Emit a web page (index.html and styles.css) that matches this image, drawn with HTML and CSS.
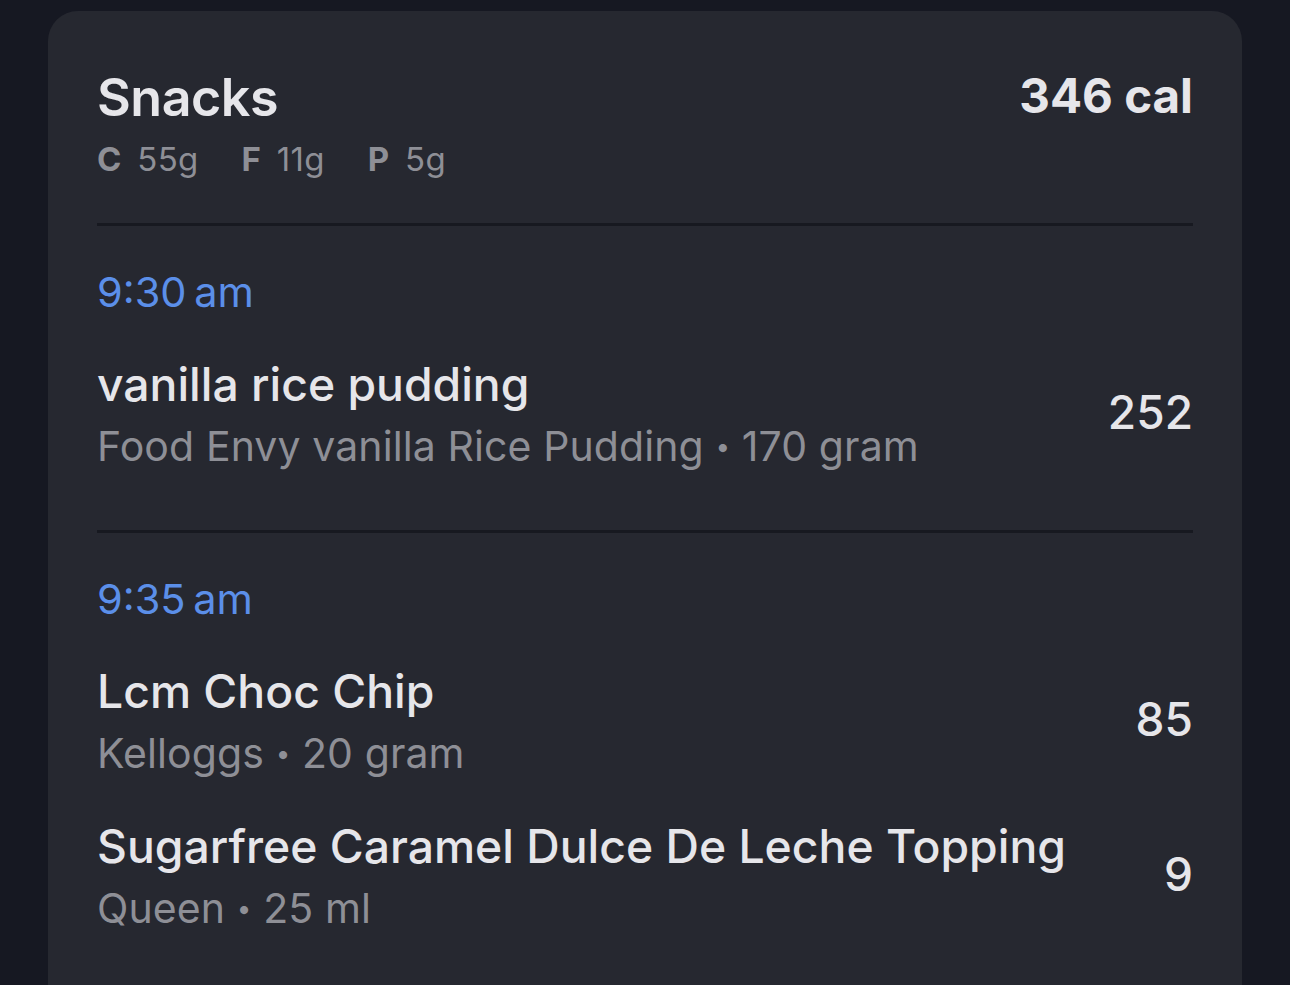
FILE: index.html
```html
<!DOCTYPE html>
<html lang="en">
<head>
    <meta charset="UTF-8">
    <meta name="viewport" content="width=device-width, initial-scale=1.0">
    <title>Snacks</title>
    <link rel="stylesheet" href="styles.css">
</head>
<body>
    <div class="page">
        <div class="meal-card">
            <div class="meal-head">
                <div>
                    <h1 class="meal-title">Snacks</h1>
                    <div class="macros">
                        <span><b>C</b> 55g</span>
                        <span><b>F</b> 11g</span>
                        <span><b>P</b> 5g</span>
                    </div>
                </div>
                <div class="meal-cal">346 cal</div>
            </div>

            <div class="entry">
                <p class="time">9:30 am</p>
                <div class="food">
                    <div class="food-info">
                        <p class="food-name">vanilla rice pudding</p>
                        <p class="food-sub">Food Envy vanilla Rice Pudding <span class="dot">&bull;</span> 170 gram</p>
                    </div>
                    <div class="food-cal">252</div>
                </div>
            </div>

            <div class="entry">
                <p class="time">9:35 am</p>
                <div class="food">
                    <div class="food-info">
                        <p class="food-name">Lcm Choc Chip</p>
                        <p class="food-sub">Kelloggs <span class="dot">&bull;</span> 20 gram</p>
                    </div>
                    <div class="food-cal">85</div>
                </div>
                <div class="food">
                    <div class="food-info">
                        <p class="food-name">Sugarfree Caramel Dulce De Leche Topping</p>
                        <p class="food-sub">Queen <span class="dot">&bull;</span> 25 ml</p>
                    </div>
                    <div class="food-cal">9</div>
                </div>
            </div>
        </div>
    </div>
</body>
</html>
```

FILE: styles.css
```css
body{
    margin: 0;
    background-color: #161822;
    font-family: "Inter", "Noto Sans", sans-serif;
    color: #e6e6ea;
    overflow: hidden;
}

p, h1{
    margin: 0;
}

.page{
    height: 985px;
    padding: 11px 48px 0 48px;
}

.meal-card{
    background-color: #262830;
    border-radius: 30px 30px 0 0;
    padding: 0 49px;
    height: 1100px;
}

.meal-head{
    display: flex;
    justify-content: space-between;
    align-items: flex-start;
    padding-top: 55px;
    padding-bottom: 42px;
    border-bottom: 3px solid #171920;
}

.meal-title{
    font-size: 52px;
    font-weight: 600;
    line-height: 64px;
    letter-spacing: -0.5px;
}

.macros{
    display: flex;
    gap: 43px;
    color: #8e8f96;
    font-size: 33px;
    line-height: 44px;
    letter-spacing: 0.3px;
    margin-top: 7px;
}

.macros b{
    font-weight: 700;
    margin-right: 6px;
}

.meal-cal{
    font-size: 47.5px;
    font-weight: 700;
    line-height: 64px;
    margin-top: -2px;
}

.entry{
    padding-top: 41px;
    padding-bottom: 51px;
    border-bottom: 3px solid #171920;
}

.entry:last-child{
    border-bottom: none;
}

.time{
    color: #5b8fe9;
    font-size: 41.5px;
    line-height: 50px;
    word-spacing: -4px;
    margin-bottom: 37px;
}

.food{
    display: flex;
    justify-content: space-between;
    align-items: center;
    margin-bottom: 30px;
}

.food:last-child{
    margin-bottom: 0;
}

.food-name{
    font-size: 46.3px;
    font-weight: 500;
    line-height: 60px;
}

.food-sub{
    color: #8e8f96;
    font-size: 41px;
    line-height: 64px;
    letter-spacing: 0.1px;
}

.dot{
    font-size: 26px;
    vertical-align: 5px;
}

.food-cal{
    font-size: 46px;
    font-weight: 500;
    margin-bottom: 10px;
}
```
